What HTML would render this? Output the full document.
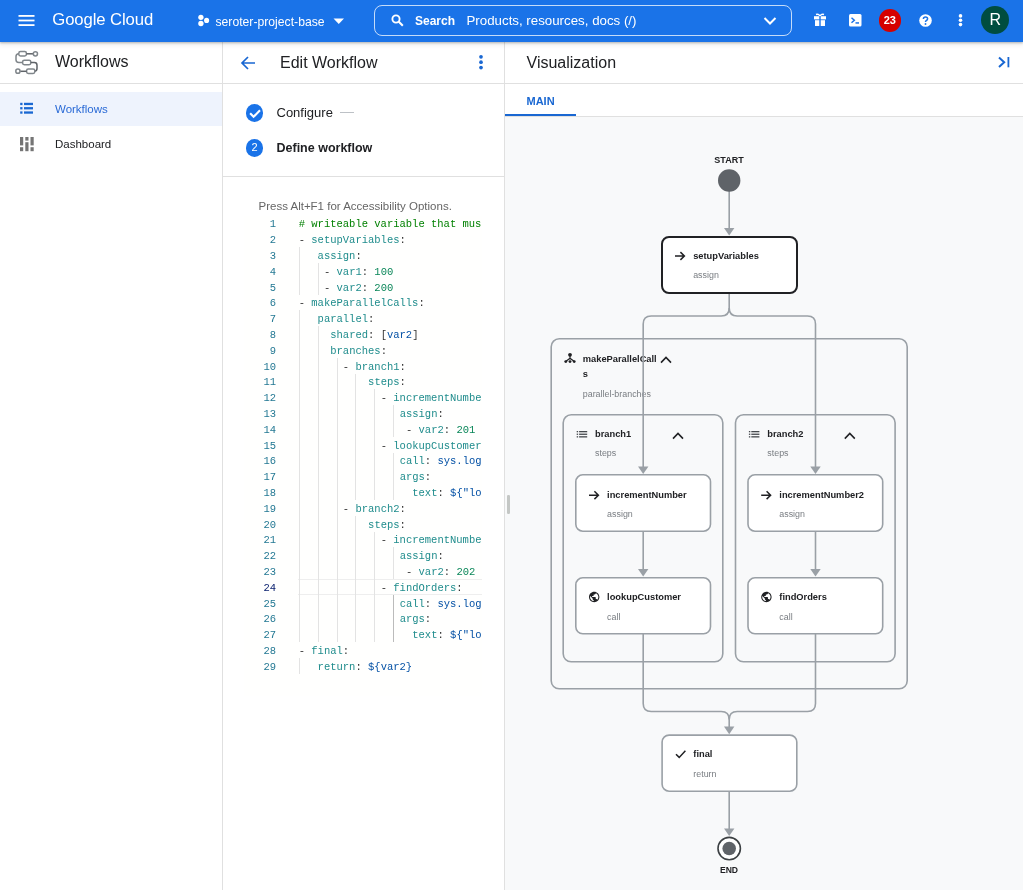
<!DOCTYPE html>
<html><head><meta charset="utf-8">
<style>
*{box-sizing:border-box;margin:0;padding:0}
html,body{will-change:transform;width:1023px;height:890px;overflow:hidden;background:#fff;font-family:"Liberation Sans",sans-serif;color:#202124}
.a{position:absolute;white-space:pre}
#hdr{position:absolute;left:0;top:0;width:1023px;height:41.6px;background:#1a73e8;z-index:5;box-shadow:0 1px 2px rgba(60,64,67,.3),0 1px 5px 1px rgba(60,64,67,.15)}
.w{color:#fff}
.vl{position:absolute;background:#dadce0}
.hl{position:absolute;background:#e0e0e0;height:1px}
.cd{font-family:"Liberation Mono",monospace;font-size:10.515px;line-height:15.8px;height:15.8px;padding-top:1.9px}
</style></head><body>

<!-- HEADER -->
<div id="hdr">
  <svg class="a" style="left:18px;top:14.8px" width="17" height="12" viewBox="0 0 17 12"><rect x="0.5" y="0" width="16" height="1.8" fill="#fff"/><rect x="0.5" y="4.6" width="16" height="1.8" fill="#fff"/><rect x="0.5" y="9.2" width="16" height="1.8" fill="#fff"/></svg>
  <div class="a w" style="left:52.3px;top:9.8px;font-size:16.7px;line-height:20px;letter-spacing:-0.1px">Google Cloud</div>
  <svg class="a" style="left:197px;top:14px" width="13" height="13" viewBox="0 0 13 13"><circle cx="3.9" cy="3.3" r="2.65" fill="#fff"/><circle cx="9.6" cy="6.4" r="2.55" fill="#fff"/><circle cx="3.9" cy="9.5" r="2.65" fill="#fff"/></svg>
  <div class="a w" style="left:215.5px;top:14.5px;font-size:12.2px;line-height:14px">seroter-project-base</div>
  <svg class="a" style="left:333px;top:18px" width="12" height="7" viewBox="0 0 12 7"><path d="M0.5 0.5 H11 L5.75 6 Z" fill="#fff"/></svg>
  <div class="a" style="left:373.5px;top:4.5px;width:418px;height:31px;border:1px solid rgba(255,255,255,.75);border-radius:8px"></div>
  <svg class="a" style="left:391px;top:14px" width="13" height="13" viewBox="0 0 13 13"><circle cx="5" cy="5" r="3.6" fill="none" stroke="#fff" stroke-width="1.9"/><path d="M7.6 7.6 L11.8 11.8" stroke="#fff" stroke-width="2.1"/></svg>
  <div class="a w" style="left:415px;top:13.8px;font-size:12px;line-height:14px;font-weight:700">Search</div>
  <div class="a w" style="left:466.5px;top:13.5px;font-size:13.3px;line-height:14px">Products, resources, docs (/)</div>
  <svg class="a" style="left:763px;top:16px" width="14" height="10" viewBox="0 0 14 10"><path d="M1.5 2 L7 7.5 L12.5 2" fill="none" stroke="#fff" stroke-width="2"/></svg>
  <!-- gift -->
  <svg class="a" style="left:813px;top:13px" width="14" height="14" viewBox="0 0 14 14"><path d="M3 1.5 Q5.5 0.5 7 3 Q8.5 0.5 11 1.5" fill="none" stroke="#fff" stroke-width="1.4"/><rect x="1" y="3.2" width="12" height="3.2" fill="#fff"/><rect x="2" y="7.2" width="10" height="5.8" fill="#fff"/><rect x="6.3" y="3" width="1.4" height="10" fill="#1a73e8"/></svg>
  <!-- terminal -->
  <svg class="a" style="left:848.5px;top:14px" width="13" height="13" viewBox="0 0 13 13"><rect x="0" y="0" width="12.5" height="12.5" rx="1.5" fill="#fff"/><path d="M2.5 3.8 L5.3 6.3 L2.5 8.8" fill="none" stroke="#1a73e8" stroke-width="1.5"/><rect x="6.5" y="8.2" width="3.5" height="1.5" fill="#1a73e8"/></svg>
  <div class="a" style="left:878.5px;top:9px;width:22.5px;height:22.5px;border-radius:50%;background:#d50000;color:#fff;font-size:11px;font-weight:700;line-height:22.5px;text-align:center">23</div>
  <!-- help -->
  <svg class="a" style="left:918.5px;top:14px" width="13" height="13" viewBox="0 0 13 13"><circle cx="6.5" cy="6.5" r="6.3" fill="#fff"/><path d="M4.4 5 Q4.4 2.9 6.5 2.9 Q8.6 2.9 8.6 4.8 Q8.6 5.9 7.3 6.6 Q6.5 7.1 6.5 8" fill="none" stroke="#1a73e8" stroke-width="1.5"/><circle cx="6.5" cy="10" r="0.95" fill="#1a73e8"/></svg>
  <svg class="a" style="left:957.5px;top:14px" width="5" height="13" viewBox="0 0 5 13"><circle cx="2.5" cy="1.9" r="1.8" fill="#fff"/><circle cx="2.5" cy="6.3" r="1.8" fill="#fff"/><circle cx="2.5" cy="10.6" r="1.8" fill="#fff"/></svg>
  <div class="a" style="left:981.3px;top:6.2px;width:28px;height:28px;border-radius:50%;background:#004d40;color:#fff;font-size:16px;line-height:28px;text-align:center">R</div>
</div>

<!-- LEFT NAV -->
<svg class="a" style="left:14px;top:49px" width="26" height="28" viewBox="14 49 26 28">
 <g fill="none" stroke="#80868b" stroke-width="1.5">
  <rect x="18.8" y="51.6" width="7.6" height="4.4" rx="1.7"/>
  <line x1="26.4" y1="53.8" x2="33" y2="53.8" stroke="#5f6368"/>
  <circle cx="35.4" cy="53.8" r="2.1"/>
  <path d="M18.8 53.8 Q16 53.8 16 56.6 V59.8 Q16 62.5 18.8 62.5 H22.6"/>
  <rect x="22.6" y="60.3" width="8.2" height="4.4" rx="1.7"/>
  <path d="M30.8 62.5 H34.4 Q37 62.5 37 65.2 V68.6 Q37 71.3 34.4 71.3 H34.8" stroke="#5f6368"/>
  <rect x="26.6" y="69.1" width="8.2" height="4.4" rx="1.7"/>
  <line x1="20.2" y1="71.3" x2="26.6" y2="71.3" stroke="#5f6368"/>
  <circle cx="17.9" cy="71.2" r="2.1"/>
 </g>
</svg>
<div class="a" style="left:55px;top:53px;font-size:16px;line-height:18px;color:#202124">Workflows</div>
<div class="hl" style="left:0;top:83px;width:1023px"></div>
<div class="a" style="left:0;top:92px;width:222px;height:34px;background:#eef3fd"></div>
<svg class="a" style="left:20px;top:102px" width="14" height="14" viewBox="0 0 14 14"><g fill="#1967d2"><rect x="0.2" y="0.8" width="2.3" height="2.3"/><rect x="4" y="0.8" width="9" height="2.3"/><rect x="0.2" y="5.1" width="2.3" height="2.3"/><rect x="4" y="5.1" width="9" height="2.3"/><rect x="0.2" y="9.4" width="2.3" height="2.3"/><rect x="4" y="9.4" width="9" height="2.3"/></g></svg>
<div class="a" style="left:55px;top:102px;font-size:11.5px;line-height:14px;color:#2a6ad6">Workflows</div>
<svg class="a" style="left:20px;top:137px" width="14" height="15" viewBox="0 0 14 15"><g fill="#757575"><rect x="0" y="0" width="3.2" height="8.4"/><rect x="0" y="10.2" width="3.2" height="4"/><rect x="5.3" y="0" width="3.2" height="3.6"/><rect x="5.3" y="5.2" width="3.2" height="9"/><rect x="10.5" y="0" width="3.2" height="8.4"/><rect x="10.5" y="10.2" width="3.2" height="4"/></g></svg>
<div class="a" style="left:55px;top:137px;font-size:11.5px;line-height:14px;color:#202124">Dashboard</div>

<!-- dividers -->
<div class="vl" style="left:222px;top:42px;width:1px;height:848px;background:#e0e0e0"></div>
<div class="vl" style="left:504px;top:42px;width:1px;height:848px;background:#e0e0e0"></div>

<!-- EDIT WORKFLOW PANEL -->
<svg class="a" style="left:240px;top:55px" width="16" height="16" viewBox="0 0 16 16"><path d="M15 8 H2.5 M8 2 L2 8 L8 14" fill="none" stroke="#1967d2" stroke-width="1.7"/></svg>
<div class="a" style="left:280px;top:54px;font-size:16px;line-height:18px">Edit Workflow</div>
<svg class="a" style="left:478px;top:54px" width="6" height="16" viewBox="0 0 6 16"><circle cx="3" cy="2.8" r="1.85" fill="#1967d2"/><circle cx="3" cy="8.2" r="1.85" fill="#1967d2"/><circle cx="3" cy="13.6" r="1.85" fill="#1967d2"/></svg>

<div class="a" style="left:245.7px;top:103.8px;width:17.8px;height:17.8px;border-radius:50%;background:#1a73e8"></div>
<svg class="a" style="left:245.7px;top:103.8px" width="18" height="18" viewBox="0 0 18 18"><path d="M4.1 9.2 L7.6 12.8 L14 6.2" fill="none" stroke="#fff" stroke-width="2.1"/></svg>
<div class="a" style="left:276.5px;top:105px;font-size:13px;line-height:15px">Configure</div>
<div class="a" style="left:339.5px;top:112px;width:14px;height:1px;background:#bdc1c6"></div>
<div class="a" style="left:245.7px;top:138.8px;width:17.8px;height:17.8px;border-radius:50%;background:#1a73e8;color:#fff;font-size:11px;line-height:17.8px;text-align:center">2</div>
<div class="a" style="left:276.5px;top:141px;font-size:12.5px;line-height:15px;font-weight:700">Define workflow</div>
<div class="hl" style="left:223px;top:176px;width:281px"></div>

<div class="a" style="left:258.5px;top:199px;font-size:11.5px;line-height:14px;color:#666666">Press Alt+F1 for Accessibility Options.</div>

<!--CODE-->
<div class="a" style="left:244px;top:215.6px;width:238px;height:480px;background:#fffffe"></div>
<div class="a" style="left:298px;top:579.0px;width:184px;height:15.8px;border-top:1px solid #eeeeee;border-bottom:1px solid #eeeeee"></div>
<div class="a" style="left:298.70px;top:247.2px;width:1px;height:47.4px;background:#e3e3e3"></div>
<div class="a" style="left:317.63px;top:263.0px;width:1px;height:31.6px;background:#e3e3e3"></div>
<div class="a" style="left:298.70px;top:310.4px;width:1px;height:331.8px;background:#e3e3e3"></div>
<div class="a" style="left:317.63px;top:326.2px;width:1px;height:316.0px;background:#e3e3e3"></div>
<div class="a" style="left:336.56px;top:357.8px;width:1px;height:284.4px;background:#e3e3e3"></div>
<div class="a" style="left:355.49px;top:373.6px;width:1px;height:126.4px;background:#e3e3e3"></div>
<div class="a" style="left:374.42px;top:389.4px;width:1px;height:110.6px;background:#e3e3e3"></div>
<div class="a" style="left:393.35px;top:405.2px;width:1px;height:31.6px;background:#e3e3e3"></div>
<div class="a" style="left:393.35px;top:452.6px;width:1px;height:47.4px;background:#e3e3e3"></div>
<div class="a" style="left:355.49px;top:515.8px;width:1px;height:126.4px;background:#e3e3e3"></div>
<div class="a" style="left:374.42px;top:531.6px;width:1px;height:110.6px;background:#e3e3e3"></div>
<div class="a" style="left:393.35px;top:547.4px;width:1px;height:31.6px;background:#e3e3e3"></div>
<div class="a" style="left:393.35px;top:594.8px;width:1px;height:47.4px;background:#bbbbbb"></div>
<div class="a" style="left:298.70px;top:658.0px;width:1px;height:15.8px;background:#e3e3e3"></div>
<div class="a" style="left:298.70px;top:215.6px;width:183.0px;height:458.2px;overflow:hidden">
<div class="a cd" style="left:0.00px;top:0.0px"><span style="color:#008000"># writeable variable that must be declared at top level</span></div>
<div class="a cd" style="left:0.00px;top:15.8px"><span style="color:#333333">- </span><span style="color:#1f8c8c">setupVariables</span><span style="color:#333333">:</span></div>
<div class="a cd" style="left:18.93px;top:31.6px"><span style="color:#1f8c8c">assign</span><span style="color:#333333">:</span></div>
<div class="a cd" style="left:25.24px;top:47.4px"><span style="color:#333333">- </span><span style="color:#1f8c8c">var1</span><span style="color:#333333">: </span><span style="color:#098658">100</span></div>
<div class="a cd" style="left:25.24px;top:63.2px"><span style="color:#333333">- </span><span style="color:#1f8c8c">var2</span><span style="color:#333333">: </span><span style="color:#098658">200</span></div>
<div class="a cd" style="left:0.00px;top:79.0px"><span style="color:#333333">- </span><span style="color:#1f8c8c">makeParallelCalls</span><span style="color:#333333">:</span></div>
<div class="a cd" style="left:18.93px;top:94.8px"><span style="color:#1f8c8c">parallel</span><span style="color:#333333">:</span></div>
<div class="a cd" style="left:31.55px;top:110.6px"><span style="color:#1f8c8c">shared</span><span style="color:#333333">: [</span><span style="color:#0451a5">var2</span><span style="color:#333333">]</span></div>
<div class="a cd" style="left:31.55px;top:126.4px"><span style="color:#1f8c8c">branches</span><span style="color:#333333">:</span></div>
<div class="a cd" style="left:44.17px;top:142.2px"><span style="color:#333333">- </span><span style="color:#1f8c8c">branch1</span><span style="color:#333333">:</span></div>
<div class="a cd" style="left:69.41px;top:158.0px"><span style="color:#1f8c8c">steps</span><span style="color:#333333">:</span></div>
<div class="a cd" style="left:82.03px;top:173.8px"><span style="color:#333333">- </span><span style="color:#1f8c8c">incrementNumber</span><span style="color:#333333">:</span></div>
<div class="a cd" style="left:100.96px;top:189.6px"><span style="color:#1f8c8c">assign</span><span style="color:#333333">:</span></div>
<div class="a cd" style="left:107.27px;top:205.4px"><span style="color:#333333">- </span><span style="color:#1f8c8c">var2</span><span style="color:#333333">: </span><span style="color:#098658">201</span></div>
<div class="a cd" style="left:82.03px;top:221.2px"><span style="color:#333333">- </span><span style="color:#1f8c8c">lookupCustomer</span><span style="color:#333333">:</span></div>
<div class="a cd" style="left:100.96px;top:237.0px"><span style="color:#1f8c8c">call</span><span style="color:#333333">: </span><span style="color:#0451a5">sys.log</span></div>
<div class="a cd" style="left:100.96px;top:252.8px"><span style="color:#1f8c8c">args</span><span style="color:#333333">:</span></div>
<div class="a cd" style="left:113.58px;top:268.6px"><span style="color:#1f8c8c">text</span><span style="color:#333333">: </span><span style="color:#0451a5">${&quot;lookup customer&quot;}</span></div>
<div class="a cd" style="left:44.17px;top:284.4px"><span style="color:#333333">- </span><span style="color:#1f8c8c">branch2</span><span style="color:#333333">:</span></div>
<div class="a cd" style="left:69.41px;top:300.2px"><span style="color:#1f8c8c">steps</span><span style="color:#333333">:</span></div>
<div class="a cd" style="left:82.03px;top:316.0px"><span style="color:#333333">- </span><span style="color:#1f8c8c">incrementNumber2</span><span style="color:#333333">:</span></div>
<div class="a cd" style="left:100.96px;top:331.8px"><span style="color:#1f8c8c">assign</span><span style="color:#333333">:</span></div>
<div class="a cd" style="left:107.27px;top:347.6px"><span style="color:#333333">- </span><span style="color:#1f8c8c">var2</span><span style="color:#333333">: </span><span style="color:#098658">202</span></div>
<div class="a cd" style="left:82.03px;top:363.4px"><span style="color:#333333">- </span><span style="color:#1f8c8c">findOrders</span><span style="color:#333333">:</span></div>
<div class="a cd" style="left:100.96px;top:379.2px"><span style="color:#1f8c8c">call</span><span style="color:#333333">: </span><span style="color:#0451a5">sys.log</span></div>
<div class="a cd" style="left:100.96px;top:395.0px"><span style="color:#1f8c8c">args</span><span style="color:#333333">:</span></div>
<div class="a cd" style="left:113.58px;top:410.8px"><span style="color:#1f8c8c">text</span><span style="color:#333333">: </span><span style="color:#0451a5">${&quot;looking for orders&quot;}</span></div>
<div class="a cd" style="left:0.00px;top:426.6px"><span style="color:#333333">- </span><span style="color:#1f8c8c">final</span><span style="color:#333333">:</span></div>
<div class="a cd" style="left:18.93px;top:442.4px"><span style="color:#1f8c8c">return</span><span style="color:#333333">: </span><span style="color:#0451a5">${var2}</span></div>
</div>
<div class="a cd ln" style="left:240px;top:215.6px;width:36px;text-align:right;color:#237893">1</div>
<div class="a cd ln" style="left:240px;top:231.4px;width:36px;text-align:right;color:#237893">2</div>
<div class="a cd ln" style="left:240px;top:247.2px;width:36px;text-align:right;color:#237893">3</div>
<div class="a cd ln" style="left:240px;top:263.0px;width:36px;text-align:right;color:#237893">4</div>
<div class="a cd ln" style="left:240px;top:278.8px;width:36px;text-align:right;color:#237893">5</div>
<div class="a cd ln" style="left:240px;top:294.6px;width:36px;text-align:right;color:#237893">6</div>
<div class="a cd ln" style="left:240px;top:310.4px;width:36px;text-align:right;color:#237893">7</div>
<div class="a cd ln" style="left:240px;top:326.2px;width:36px;text-align:right;color:#237893">8</div>
<div class="a cd ln" style="left:240px;top:342.0px;width:36px;text-align:right;color:#237893">9</div>
<div class="a cd ln" style="left:240px;top:357.8px;width:36px;text-align:right;color:#237893">10</div>
<div class="a cd ln" style="left:240px;top:373.6px;width:36px;text-align:right;color:#237893">11</div>
<div class="a cd ln" style="left:240px;top:389.4px;width:36px;text-align:right;color:#237893">12</div>
<div class="a cd ln" style="left:240px;top:405.2px;width:36px;text-align:right;color:#237893">13</div>
<div class="a cd ln" style="left:240px;top:421.0px;width:36px;text-align:right;color:#237893">14</div>
<div class="a cd ln" style="left:240px;top:436.8px;width:36px;text-align:right;color:#237893">15</div>
<div class="a cd ln" style="left:240px;top:452.6px;width:36px;text-align:right;color:#237893">16</div>
<div class="a cd ln" style="left:240px;top:468.4px;width:36px;text-align:right;color:#237893">17</div>
<div class="a cd ln" style="left:240px;top:484.2px;width:36px;text-align:right;color:#237893">18</div>
<div class="a cd ln" style="left:240px;top:500.0px;width:36px;text-align:right;color:#237893">19</div>
<div class="a cd ln" style="left:240px;top:515.8px;width:36px;text-align:right;color:#237893">20</div>
<div class="a cd ln" style="left:240px;top:531.6px;width:36px;text-align:right;color:#237893">21</div>
<div class="a cd ln" style="left:240px;top:547.4px;width:36px;text-align:right;color:#237893">22</div>
<div class="a cd ln" style="left:240px;top:563.2px;width:36px;text-align:right;color:#237893">23</div>
<div class="a cd ln" style="left:240px;top:579.0px;width:36px;text-align:right;color:#0b216f">24</div>
<div class="a cd ln" style="left:240px;top:594.8px;width:36px;text-align:right;color:#237893">25</div>
<div class="a cd ln" style="left:240px;top:610.6px;width:36px;text-align:right;color:#237893">26</div>
<div class="a cd ln" style="left:240px;top:626.4px;width:36px;text-align:right;color:#237893">27</div>
<div class="a cd ln" style="left:240px;top:642.2px;width:36px;text-align:right;color:#237893">28</div>
<div class="a cd ln" style="left:240px;top:658.0px;width:36px;text-align:right;color:#237893">29</div>
<!-- VISUALIZATION PANEL -->
<div class="a" style="left:526.5px;top:54.3px;font-size:16px;line-height:18px">Visualization</div>
<svg class="a" style="left:997px;top:55px" width="14" height="14" viewBox="0 0 14 14"><path d="M2 2.4 L7.2 7.2 L2 12" fill="none" stroke="#1967d2" stroke-width="2"/><rect x="10.5" y="2" width="1.8" height="10.3" fill="#1967d2"/></svg>
<div class="a" style="left:526.5px;top:95px;font-size:11px;line-height:12px;font-weight:700;color:#1967d2">MAIN</div>
<div class="a" style="left:505px;top:116px;width:518px;height:774px;background:#f8f9fa"></div>
<div class="hl" style="left:505px;top:116px;width:518px;background:#e0e0e0"></div>
<div class="a" style="left:505px;top:114px;width:71px;height:2.4px;background:#1967d2"></div>
<div class="a" style="left:507.2px;top:494.7px;width:2.4px;height:19px;border-radius:1.2px;background:#c4c7c5"></div>

<!--GRAPH-->
<svg class="a" style="left:0;top:0" width="1023" height="890" viewBox="0 0 1023 890">
<g fill="none" stroke="#9aa0a6" stroke-width="1.6">
<rect x="551.2" y="338.8" width="356" height="350" rx="8"/>
<rect x="563.2" y="414.8" width="159.6" height="247" rx="8"/>
<rect x="735.5" y="414.8" width="159.6" height="247" rx="8"/>
</g>
</svg>
<div class="a" style="left:699px;top:154.9px;width:60px;text-align:center;font-size:9px;line-height:10.35px;font-weight:700;color:#202124">START</div>
<div class="a" style="left:699px;top:865.8px;width:60px;text-align:center;font-size:8.6px;line-height:9.9px;font-weight:700;color:#202124">END</div>
<div class="a" style="left:582.8px;top:354.2px;font-size:9.3px;line-height:10.70px;font-weight:700;color:#202124;letter-spacing:0px">makeParallelCall</div>
<div class="a" style="left:582.8px;top:369.0px;font-size:9.3px;line-height:10.70px;font-weight:700;color:#202124;letter-spacing:0px">s</div>
<div class="a" style="left:582.8px;top:388.5px;font-size:8.9px;line-height:10.23px;font-weight:400;color:#797d82;letter-spacing:0px">parallel-branches</div>
<div class="a" style="left:595px;top:429.2px;font-size:9.3px;line-height:10.70px;font-weight:700;color:#202124;letter-spacing:0px">branch1</div>
<div class="a" style="left:595px;top:448.3px;font-size:8.9px;line-height:10.23px;font-weight:400;color:#797d82;letter-spacing:0px">steps</div>
<div class="a" style="left:767.3px;top:429.2px;font-size:9.3px;line-height:10.70px;font-weight:700;color:#202124;letter-spacing:0px">branch2</div>
<div class="a" style="left:767.3px;top:448.3px;font-size:8.9px;line-height:10.23px;font-weight:400;color:#797d82;letter-spacing:0px">steps</div>
<svg class="a" style="left:0;top:0" width="1023" height="890" viewBox="0 0 1023 890">
<g fill="#202124"><circle cx="570" cy="354.8" r="1.9"/><path d="M570 356 V359.5 M570 358.3 L566 361.3 M570 358.3 L574 361.3" stroke="#202124" stroke-width="1.2" fill="none"/><circle cx="565.8" cy="361.6" r="1.45"/><circle cx="570" cy="361.6" r="1.45"/><circle cx="574.2" cy="361.6" r="1.45"/></g>
<path d="M661 362.6 L666 357.5 L671 362.6" fill="none" stroke="#202124" stroke-width="1.6"/>
<path d="M673 438.6 L678 433.5 L683 438.6" fill="none" stroke="#202124" stroke-width="1.6"/>
<path d="M844.8 438.6 L849.8 433.5 L854.8 438.6" fill="none" stroke="#202124" stroke-width="1.6"/>
<g fill="#45494d"><rect x="576.7" y="431" width="1.4" height="1.3"/><rect x="579.1" y="431" width="8.1" height="1.3"/><rect x="576.7" y="433.6" width="1.4" height="1.3"/><rect x="579.1" y="433.6" width="8.1" height="1.3"/><rect x="576.7" y="436.2" width="1.4" height="1.3"/><rect x="579.1" y="436.2" width="8.1" height="1.3"/></g>
<g fill="#45494d"><rect x="748.9" y="431" width="1.4" height="1.3"/><rect x="751.3" y="431" width="8.1" height="1.3"/><rect x="748.9" y="433.6" width="1.4" height="1.3"/><rect x="751.3" y="433.6" width="8.1" height="1.3"/><rect x="748.9" y="436.2" width="1.4" height="1.3"/><rect x="751.3" y="436.2" width="8.1" height="1.3"/></g>
</svg>
<svg class="a" style="left:0;top:0" width="1023" height="890" viewBox="0 0 1023 890">
<g fill="none" stroke="#9aa0a6" stroke-width="1.6">
<path d="M729.2 191 V229"/>
<path d="M729.2 293 V308 Q729.2 316 721.2 316 H651.2 Q643.2 316 643.2 324 V467"/>
<path d="M729.2 308 Q729.2 316 737.2 316 H807.5 Q815.5 316 815.5 324 V467"/>
<path d="M643.2 532 V570"/><path d="M815.5 532 V570"/>
<path d="M643.2 634 V703.5 Q643.2 711.5 651.2 711.5 H721.2 Q729.2 711.5 729.2 719.5 V727"/>
<path d="M815.5 634 V703.5 Q815.5 711.5 807.5 711.5 H737.2 Q729.2 711.5 729.2 719.5"/>
<path d="M729.2 791 V830"/>
</g>
<g fill="#9aa0a6">
<path d="M724.0 227.9 H734.4000000000001 L729.2 235.5 Z"/>
<path d="M638.0 466.4 H648.4000000000001 L643.2 474 Z"/>
<path d="M810.3 466.4 H820.7 L815.5 474 Z"/>
<path d="M638.0 568.9 H648.4000000000001 L643.2 576.5 Z"/>
<path d="M810.3 568.9 H820.7 L815.5 576.5 Z"/>
<path d="M724.0 726.6 H734.4000000000001 L729.2 734.2 Z"/>
<path d="M724.0 828.4 H734.4000000000001 L729.2 836 Z"/>
</g>
<circle cx="729.2" cy="180.5" r="11.2" fill="#5f6368"/>
<circle cx="729.2" cy="848.6" r="11.2" fill="#fff" stroke="#3c4043" stroke-width="1.6"/>
<circle cx="729.2" cy="848.5" r="6.8" fill="#5f6368"/>
<rect x="662" y="237" width="135" height="56" rx="7" fill="#fff" stroke="#202124" stroke-width="2"/>
<rect x="575.8" y="474.8" width="134.70000000000002" height="56.4" rx="7" fill="#fff" stroke="#9aa0a6" stroke-width="1.6"/>
<rect x="748.0" y="474.8" width="134.70000000000002" height="56.4" rx="7" fill="#fff" stroke="#9aa0a6" stroke-width="1.6"/>
<rect x="575.8" y="577.8" width="134.70000000000002" height="56.0" rx="7" fill="#fff" stroke="#9aa0a6" stroke-width="1.6"/>
<rect x="748.0" y="577.8" width="134.70000000000002" height="56.0" rx="7" fill="#fff" stroke="#9aa0a6" stroke-width="1.6"/>
<rect x="662.0999999999999" y="735.0999999999999" width="134.70000000000002" height="56.1" rx="7" fill="#fff" stroke="#9aa0a6" stroke-width="1.6"/>
<path d="M675 256 H684.2 M680.4 252.1 L684.4 256 L680.4 259.9" fill="none" stroke="#202124" stroke-width="1.5"/>
<path d="M589 495.2 H598.2 M594.4 491.3 L598.4 495.2 L594.4 499.09999999999997" fill="none" stroke="#202124" stroke-width="1.5"/>
<path d="M761.2 495.2 H770.4000000000001 M766.6 491.3 L770.6 495.2 L766.6 499.09999999999997" fill="none" stroke="#202124" stroke-width="1.5"/>
<path transform="translate(587.96 590.76) scale(0.52)" fill="#202124" d="M12 2C6.48 2 2 6.48 2 12s4.48 10 10 10 10-4.48 10-10S17.52 2 12 2zm-1 17.93c-3.95-.49-7-3.850-7-7.93 0-.62.08-1.21.21-1.79L9 15v1c0 1.1.9 2 2 2v1.930zm6.9-2.54c-.26-.81-1-1.39-1.9-1.39h-1v-3c0-.55-.45-1-1-1H8v-2h2c.55 0 1-.45 1-1V7h2c1.1 0 2-.9 2-2v-.41c2.93 1.19 5 4.06 5 7.41 0 2.08-.8 3.97-2.1 5.39z"/>
<path transform="translate(760.16 590.76) scale(0.52)" fill="#202124" d="M12 2C6.48 2 2 6.48 2 12s4.48 10 10 10 10-4.48 10-10S17.52 2 12 2zm-1 17.93c-3.95-.49-7-3.850-7-7.93 0-.62.08-1.21.21-1.79L9 15v1c0 1.1.9 2 2 2v1.930zm6.9-2.54c-.26-.81-1-1.39-1.9-1.39h-1v-3c0-.55-.45-1-1-1H8v-2h2c.55 0 1-.45 1-1V7h2c1.1 0 2-.9 2-2v-.41c2.93 1.19 5 4.06 5 7.41 0 2.08-.8 3.97-2.1 5.39z"/>
<path d="M676 754.2 L679.2 757.4 L685.4 750.8" fill="none" stroke="#202124" stroke-width="1.5"/>
</svg>
<div class="a" style="left:693.2px;top:251.2px;font-size:9.3px;line-height:10.70px;font-weight:700;color:#202124;letter-spacing:0px">setupVariables</div>
<div class="a" style="left:693.2px;top:270.3px;font-size:8.9px;line-height:10.23px;font-weight:400;color:#797d82;letter-spacing:0px">assign</div>
<div class="a" style="left:607.1px;top:490.2px;font-size:9.3px;line-height:10.70px;font-weight:700;color:#202124;letter-spacing:0px">incrementNumber</div>
<div class="a" style="left:607.1px;top:509.3px;font-size:8.9px;line-height:10.23px;font-weight:400;color:#797d82;letter-spacing:0px">assign</div>
<div class="a" style="left:779.3px;top:490.2px;font-size:9.3px;line-height:10.70px;font-weight:700;color:#202124;letter-spacing:0px">incrementNumber2</div>
<div class="a" style="left:779.3px;top:509.3px;font-size:8.9px;line-height:10.23px;font-weight:400;color:#797d82;letter-spacing:0px">assign</div>
<div class="a" style="left:607.1px;top:592.4px;font-size:9.3px;line-height:10.70px;font-weight:700;color:#202124;letter-spacing:0px">lookupCustomer</div>
<div class="a" style="left:607.1px;top:611.7px;font-size:8.9px;line-height:10.23px;font-weight:400;color:#797d82;letter-spacing:0px">call</div>
<div class="a" style="left:779.3px;top:592.4px;font-size:9.3px;line-height:10.70px;font-weight:700;color:#202124;letter-spacing:0px">findOrders</div>
<div class="a" style="left:779.3px;top:611.7px;font-size:8.9px;line-height:10.23px;font-weight:400;color:#797d82;letter-spacing:0px">call</div>
<div class="a" style="left:693.3px;top:749.2px;font-size:9.3px;line-height:10.70px;font-weight:700;color:#202124;letter-spacing:0px">final</div>
<div class="a" style="left:693.3px;top:768.9px;font-size:8.9px;line-height:10.23px;font-weight:400;color:#797d82;letter-spacing:0px">return</div>
</body></html>
